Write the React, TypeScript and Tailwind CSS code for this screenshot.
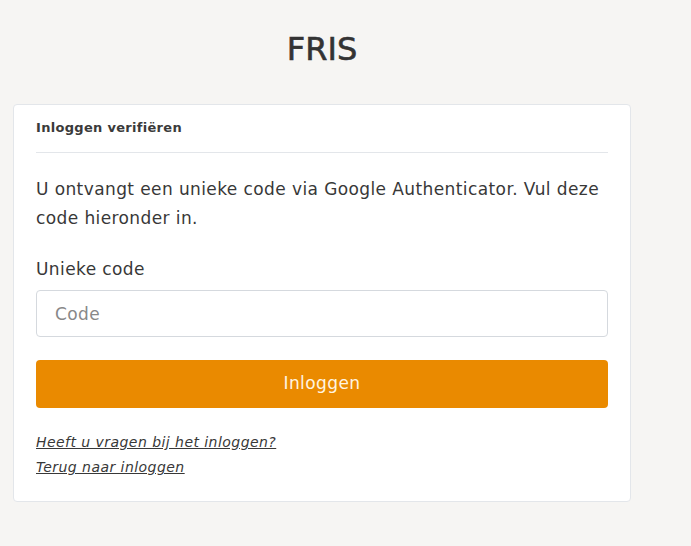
export default function App() {
  return (
    <div className="min-h-[546px] bg-[#f6f5f3] pt-[30px] font-['DejaVu_Sans',sans-serif] text-[#333]">
      <div className="ml-[13px] w-[618px]">
        <h1 className="text-center text-[32px] leading-[38px] font-normal text-[#333] [-webkit-text-stroke:0.6px_#333]">FRIS</h1>

        <div className="mt-9 rounded border border-[#e3e6ea] bg-white px-[22px] pb-[21px]">
          <div className="border-b border-[#e3e6ea] pt-[13px] pb-[14px] text-[13px] leading-5 font-bold tracking-[0.3px] text-[#3a3a3a]">
            Inloggen verifiëren
          </div>

          <p className="mt-[22px] text-[17px] leading-[29px] tracking-[0.4px] text-[#383838]">
            U ontvangt een unieke code via Google Authenticator. Vul deze code hieronder in.
          </p>

          <label htmlFor="code" className="mt-6 block text-[17px] leading-6 tracking-[0.4px] text-[#383838]">
            Unieke code
          </label>
          <input
            id="code"
            type="text"
            placeholder="Code"
            className="mt-[9px] block h-[47px] w-full rounded border border-[#d5d9de] px-[18px] text-[17px] tracking-[0.4px] text-[#333] placeholder:text-[#888] outline-none"
          />

          <button className="mt-[23px] block h-12 w-full rounded bg-[#ea8a00] text-[17px] tracking-[0.4px] text-[#fff4e0]">
            Inloggen
          </button>

          <div className="mt-[22px] flex flex-col items-start text-[14px] leading-[25px] italic tracking-[0.45px]">
            <a href="#" className="text-[#383838] underline">Heeft u vragen bij het inloggen?</a>
            <a href="#" className="text-[#383838] underline">Terug naar inloggen</a>
          </div>
        </div>
      </div>
    </div>
  );
}
